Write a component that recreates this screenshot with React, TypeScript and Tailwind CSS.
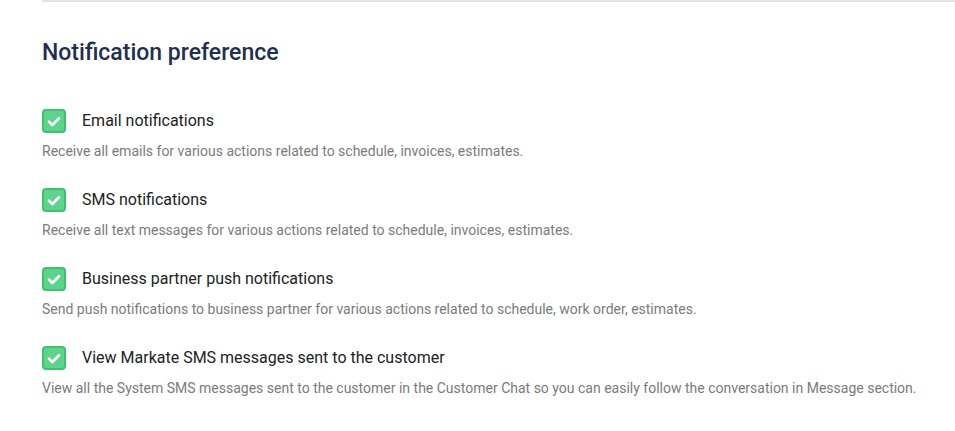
const items = [
  {
    title: "Email notifications",
    desc: "Receive all emails for various actions related to schedule, invoices, estimates.",
  },
  {
    title: "SMS notifications",
    desc: "Receive all text messages for various actions related to schedule, invoices, estimates.",
  },
  {
    title: "Business partner push notifications",
    desc: "Send push notifications to business partner for various actions related to schedule, work order, estimates.",
  },
  {
    title: "View Markate SMS messages sent to the customer",
    desc: "View all the System SMS messages sent to the customer in the Customer Chat so you can easily follow the conversation in Message section.",
  },
];

function CheckBox() {
  return (
    <span className="flex h-6 w-6 shrink-0 items-center justify-center rounded-[4px] border-2 border-[#3fc172] bg-[#5dd38c]">
      <svg viewBox="0 0 14 11" className="h-[11px] w-[14px]" fill="none">
        <path d="M2 5.8l3.3 3.2L12 2.2" stroke="white" strokeWidth="2.7" strokeLinecap="round" strokeLinejoin="round" />
      </svg>
    </span>
  );
}

export default function App() {
  return (
    <div className="min-h-[431px] w-[955px] bg-white pl-[42px] font-['Roboto',sans-serif]">
      <div className="h-[2px] bg-[#e3e3e3]" />
      <h2 className="mt-[36px] text-[23px] font-medium leading-[30px] text-[#1f2f50]">
        Notification preference
      </h2>
      <div className="mt-[41px] flex flex-col gap-[27px]">
        {items.map((it) => (
          <div key={it.title}>
            <label className="flex items-center gap-4">
              <CheckBox />
              <span className="text-[16px] leading-6 text-[#222222]">{it.title}</span>
            </label>
            <p className="mt-[9px] text-[14px] leading-[19px] text-[#7b7b7b]">{it.desc}</p>
          </div>
        ))}
      </div>
    </div>
  );
}
